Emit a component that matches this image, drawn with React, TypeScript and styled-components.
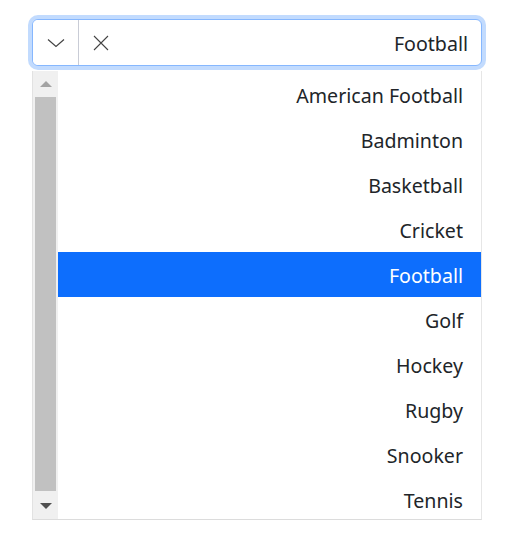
import React from "react";
import styled, { createGlobalStyle } from "styled-components";

const Global = createGlobalStyle`
  html, body { margin: 0; padding: 0; background: #fff; }
  body { font-family: "Noto Sans", "Open Sans", sans-serif; color: #212529; }
`;

const Page = styled.div`
  padding: 19px 0 0 32px;
  width: 450px;
`;

const Control = styled.div`
  display: flex;
  align-items: stretch;
  height: 47px;
  box-sizing: border-box;
  border: 1px solid #86b7fe;
  border-radius: 6px;
  box-shadow: 0 0 0 4px rgba(13, 110, 253, 0.25);
  background: #fff;
  overflow: hidden;
`;

const ToggleButton = styled.button`
  width: 46px;
  flex: none;
  border: none;
  border-right: 1px solid #c9ccd6;
  background: #fff;
  padding: 0;
  display: flex;
  align-items: center;
  justify-content: center;
`;

const ClearButton = styled.button`
  width: 44px;
  flex: none;
  border: none;
  background: transparent;
  padding: 0;
  display: flex;
  align-items: center;
  justify-content: center;
`;

const Value = styled.div`
  flex: 1;
  display: flex;
  align-items: center;
  justify-content: flex-end;
  padding: 2px 13px 0 0;
  font-size: 19.6px;
  color: #212529;
`;

const ListBox = styled.div`
  margin-top: 5px;
  display: flex;
  height: 449px;
  box-sizing: border-box;
  border-left: 1px solid #e2e2e2;
  border-right: 1px solid #e6e6e6;
  border-bottom: 1px solid #dcdcdc;
  background: #fff;
`;

const Scrollbar = styled.div`
  width: 25px;
  flex: none;
  background: #f0f0f0;
  display: flex;
  flex-direction: column;
  align-items: center;
`;

const ArrowBox = styled.div`
  height: 26px;
  width: 100%;
  display: flex;
  align-items: center;
  justify-content: center;
  flex: none;
`;

const Thumb = styled.div`
  width: 21px;
  flex: 1;
  background: #c1c1c1;
  margin: 0 0 2px 0;
`;

const Items = styled.div`
  flex: 1;
  overflow: hidden;
  padding-top: 1px;
`;

const Item = styled.div<{ $selected?: boolean }>`
  height: 45px;
  box-sizing: border-box;
  display: flex;
  align-items: center;
  justify-content: flex-end;
  padding: 2px 18px 0 0;
  font-size: 19.6px;
  background: ${(p) => (p.$selected ? "#0d6efd" : "transparent")};
  color: ${(p) => (p.$selected ? "#fff" : "#212529")};
`;

const sports = [
  "American Football",
  "Badminton",
  "Basketball",
  "Cricket",
  "Football",
  "Golf",
  "Hockey",
  "Rugby",
  "Snooker",
  "Tennis",
];

export default function App() {
  return (
    <>
      <Global />
      <Page>
        <Control>
          <ToggleButton aria-label="Toggle">
            <svg width="18" height="10" viewBox="0 0 18 10">
              <path d="M1 1.5 L9 8.5 L17 1.5" fill="none" stroke="#444" strokeWidth="1.2" />
            </svg>
          </ToggleButton>
          <ClearButton aria-label="Clear">
            <svg width="16" height="16" viewBox="0 0 16 16">
              <path d="M1 1 L15 15 M15 1 L1 15" fill="none" stroke="#444" strokeWidth="1.1" />
            </svg>
          </ClearButton>
          <Value>Football</Value>
        </Control>
        <ListBox>
          <Scrollbar>
            <ArrowBox>
              <svg width="12" height="6" viewBox="0 0 12 6">
                <path d="M6 0 L12 6 L0 6 Z" fill="#a3a3a3" />
              </svg>
            </ArrowBox>
            <Thumb />
            <ArrowBox>
              <svg width="12" height="6" viewBox="0 0 12 6">
                <path d="M0 0 L12 0 L6 6 Z" fill="#505050" />
              </svg>
            </ArrowBox>
          </Scrollbar>
          <Items>
            {sports.map((s) => (
              <Item key={s} $selected={s === "Football"}>
                {s}
              </Item>
            ))}
          </Items>
        </ListBox>
      </Page>
    </>
  );
}
